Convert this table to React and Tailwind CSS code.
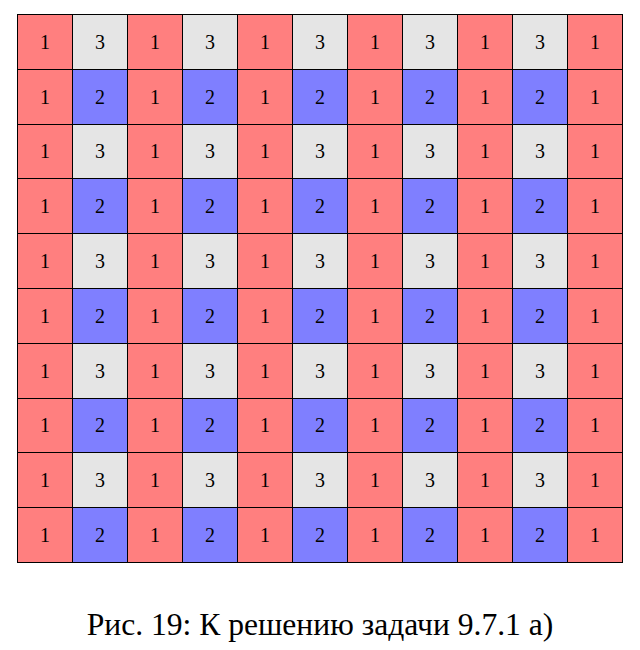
export default function App() {
  const rows = Array.from({ length: 10 }, (_, r) => r);
  const cols = Array.from({ length: 11 }, (_, c) => c);

  const cell = (r, c) => {
    if (c % 2 === 0) return { n: 1, bg: "bg-[#ff7f7f]" };
    if (r % 2 === 0) return { n: 3, bg: "bg-[#e5e5e5]" };
    return { n: 2, bg: "bg-[#7f7fff]" };
  };

  return (
    <div className="w-[640px] h-[650px] bg-white flex flex-col items-center pt-[14px] font-['Liberation_Serif']">
      <div className="grid grid-cols-[repeat(11,54px)] auto-rows-[53.8px] gap-px bg-black p-px">
        {rows.map((r) =>
          cols.map((c) => {
            const { n, bg } = cell(r, c);
            return (
              <div key={`${r}-${c}`} className={`${bg} flex items-center justify-center font-['Liberation_Serif'] text-[20px] text-black`}>
                {n}
              </div>
            );
          })
        )}
      </div>
      <div className="mt-[46px] font-['Liberation_Serif'] text-[31.6px] leading-none text-black">Рис. 19: К решению задачи 9.7.1 а)</div>
    </div>
  );
}
